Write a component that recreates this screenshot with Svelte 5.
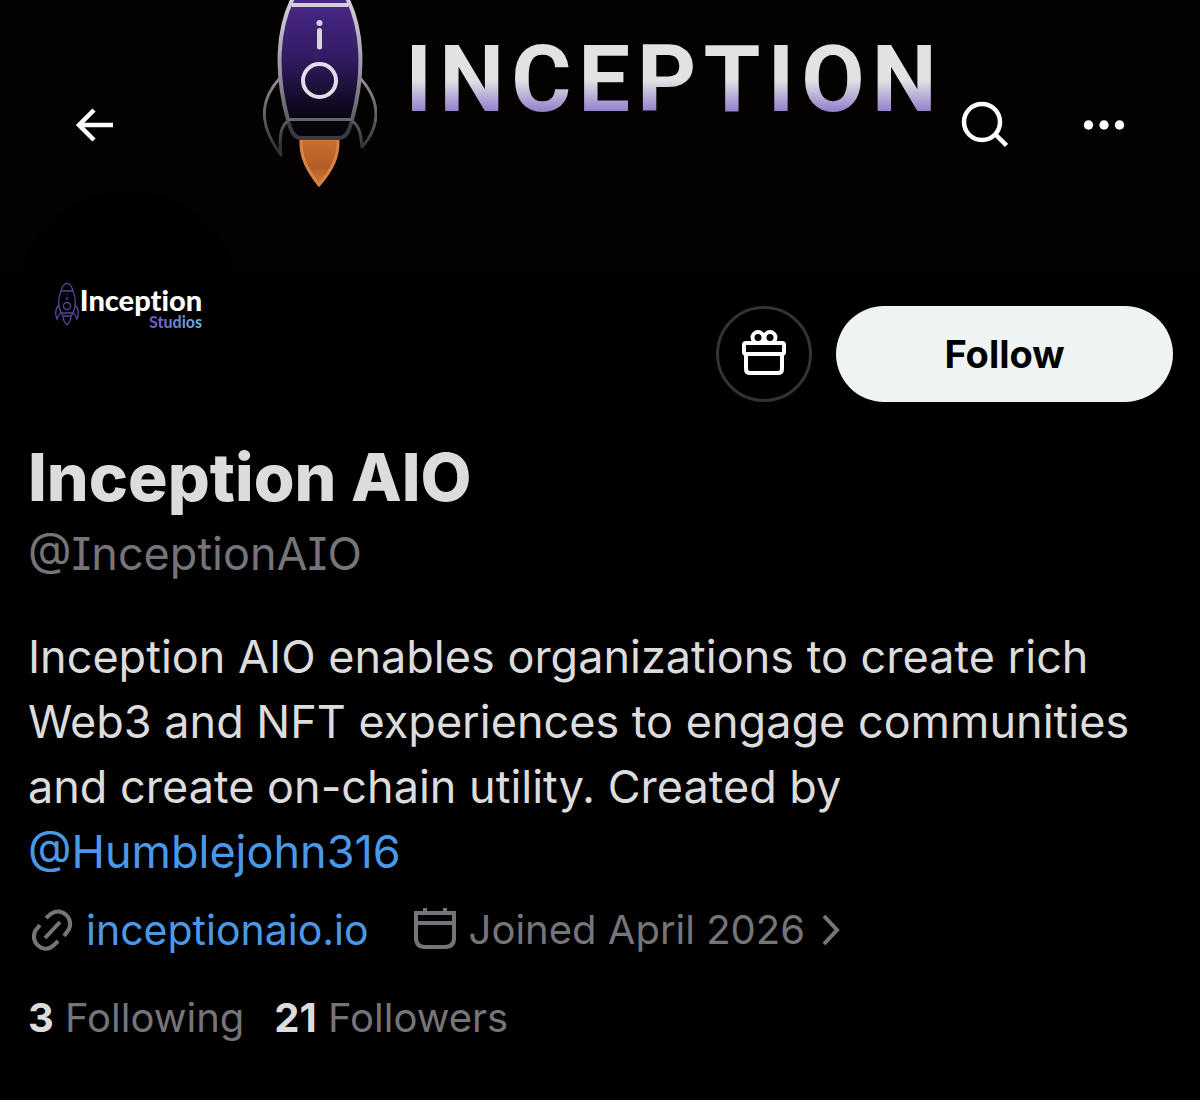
<script lang="ts">
	const profile = {
		name: 'Inception AIO',
		handle: '@InceptionAIO',
		site: 'inceptionaio.io',
		joined: 'Joined April 2026',
		following: 3,
		followers: 21
	};
</script>

<main class="profile">
	<header class="banner">
		<div class="banner-art">
			<svg class="rocket" viewBox="0 0 114 190" aria-hidden="true">
				<defs>
					<linearGradient id="hull" x1="0" y1="0" x2="0" y2="1">
						<stop offset="0" stop-color="#4b2a8c" />
						<stop offset="0.5" stop-color="#321b62" />
						<stop offset="0.85" stop-color="#130a28" />
						<stop offset="1" stop-color="#05040b" />
					</linearGradient>
					<linearGradient id="line" gradientUnits="userSpaceOnUse" x1="0" y1="0" x2="0" y2="150">
						<stop offset="0" stop-color="#d3cfdc" />
						<stop offset="0.35" stop-color="#aaa7b4" />
						<stop offset="0.75" stop-color="#66656c" />
						<stop offset="1" stop-color="#303036" />
					</linearGradient>
					<linearGradient id="flame" x1="0" y1="0" x2="0" y2="1">
						<stop offset="0" stop-color="#c9712f" />
						<stop offset="0.6" stop-color="#b45d28" />
						<stop offset="1" stop-color="#d27a38" />
					</linearGradient>
				</defs>
				<path d="M38 139H75C76 158 68 171 56 185C45 171 37 158 38 139Z" fill="url(#flame)" stroke="#d98445" stroke-width="3" />
				<g stroke="url(#line)" stroke-width="4" fill="none" stroke-linejoin="round">
					<path d="M31 -4C14 28 12 72 25 120H89C102 72 100 28 83 -4Z" fill="url(#hull)" />
					<path d="M25 120C28 132 31 138 39 138H75C83 138 86 132 89 120" fill="#05040b" stroke="#3b3a42" />
					<path d="M29 5H85" stroke="#d3cfdc" />
					<path d="M25 119.500H89" stroke="#66656c" stroke-width="3" />
					<g stroke-width="3">
						<path d="M17 78C-6 103 -2 128 18 155C16 139 17 126 25 121" />
						<path d="M97 78C120 103 116 128 99 147C98 136 97 126 89 121" />
					</g>
				</g>
				<circle cx="56.500" cy="23" r="3" fill="#d8d5df" />
				<path d="M56.500 30.500V47" stroke="#d8d5df" stroke-width="5" stroke-linecap="round" />
				<circle cx="56.500" cy="80.500" r="16.500" fill="none" stroke="#e0dde8" stroke-width="4" />
			</svg>
			<span class="wordmark">INCEPTION</span>
		</div>

		<nav class="toolbar" aria-label="Profile toolbar">
			<button class="icon-btn" aria-label="Back">
				<svg width="40" height="40" viewBox="0 0 40 40"><path d="M39 20H5M20 5L5 20L20 35" fill="none" stroke="#fff" stroke-width="4.500" /></svg>
			</button>
			<div class="toolbar-end">
				<button class="icon-btn" aria-label="Search">
					<svg width="48" height="48" viewBox="0 0 48 48"><circle cx="22" cy="21" r="18" fill="none" stroke="#fff" stroke-width="4.500" /><path d="M35 33L46.500 44.500" stroke="#fff" stroke-width="4.500" /></svg>
				</button>
				<button class="icon-btn" aria-label="More">
					<svg width="44" height="12" viewBox="0 0 44 12" fill="#fff"><circle cx="6.500" cy="6" r="4.700" /><circle cx="22" cy="6" r="4.700" /><circle cx="37.500" cy="6" r="4.700" /></svg>
				</button>
			</div>
		</nav>
	</header>

	<section class="top-row">
		<div class="avatar">
			<svg width="26" height="46" viewBox="0 0 26 46" fill="none" stroke="#514a94" stroke-width="1.300" aria-hidden="true">
				<path d="M7 10C8 6 10 3 13 2C16 3 18 6 19 10C22 17 22 25 19 32H7C4 25 4 17 7 10ZM7 10H19M7 32L9 35H17L19 32M9 35C9 39 11 42 13 44C15 42 17 39 17 35" />
				<path d="M5 24C1 28 1 33 3 38C4 35 5 33 7 32M21 24C25 28 25 33 23 38C22 35 21 33 19 32" />
				<circle cx="13" cy="25" r="3.500" />
				<path d="M13 13V14M13 16V19" />
			</svg>
			<div class="avatar-text">
				<span class="avatar-name">Inception</span>
				<span class="avatar-sub">Studios</span>
			</div>
		</div>

		<div class="actions">
			<button class="gift" aria-label="Gift">
				<svg width="46" height="48" viewBox="0 0 46 48" fill="none" stroke="#fff" stroke-width="4" stroke-linejoin="round">
					<rect x="3" y="13" width="40" height="11" rx="2" />
					<path d="M5 24V39Q5 43 9 43H37Q41 43 41 39V24" />
					<circle cx="17" cy="7.500" r="5.500" />
					<circle cx="29" cy="7.500" r="5.500" />
				</svg>
			</button>
			<button class="follow">Follow</button>
		</div>
	</section>

	<section class="info">
		<h1>{profile.name}</h1>
		<p class="handle">{profile.handle}</p>
		<p class="bio">
			Inception AIO enables organizations to create rich<br />
			Web3 and NFT experiences to engage communities<br />
			and create on-chain utility. Created by<br />
			<a href="#humblejohn">@Humblejohn316</a>
		</p>

		<div class="meta">
			<a class="meta-item site" href="#site">
				<svg width="46" height="44" viewBox="0 0 46 44" fill="none" stroke="#757579" stroke-width="4">
					<path d="M18 10L22 6.500C33 -3 49 12 39 24L36 28M12 17L9 20.500C-1 32 15 48 26 37L30 33M17 30L32 14" />
				</svg>
				{profile.site}
			</a>
			<button class="meta-item joined">
				<svg width="44" height="44" viewBox="0 0 44 44" fill="none" stroke="#757579" stroke-width="4">
					<path d="M3 5H41V30Q41 39 32 39H12Q3 39 3 30ZM3 15H41M12 0V5M32 0V5" />
				</svg>
				{profile.joined}
				<svg width="26" height="34" viewBox="0 0 26 34" fill="none" stroke="#757579" stroke-width="4"><path d="M7 3L20 17L7 31" /></svg>
			</button>
		</div>

		<div class="stats">
			<a href="#following"><strong>{profile.following}</strong> Following</a>
			<a href="#followers"><strong>{profile.followers}</strong> Followers</a>
		</div>
	</section>
</main>

<style>
	:global(body) {
		margin: 0;
		background: #000;
	}

	.profile {
		min-height: 100vh;
		background: #000;
		color: #dcdcdc;
		font-family: Inter, Roboto, sans-serif;
	}

	button {
		padding: 0;
		border: 0;
		background: none;
		font: inherit;
		color: inherit;
		cursor: pointer;
	}

	a {
		color: #4a99e9;
		text-decoration: none;
	}

	svg {
		display: block;
		flex: none;
	}

	h1,
	p {
		margin: 0;
	}

	.banner {
		display: grid;
		height: 274px;
		background: #040101;
		overflow: hidden;
	}

	.banner-art,
	.toolbar {
		grid-area: 1 / 1;
	}

	.banner-art {
		display: flex;
		justify-content: center;
		align-items: flex-start;
		gap: 28px;
	}

	.rocket {
		width: 114px;
		height: 190px;
	}

	.wordmark {
		margin: 26px -7px 0 0;
		font-family: Roboto, sans-serif;
		font-size: 92px;
		font-weight: 700;
		line-height: 108px;
		letter-spacing: 7px;
		color: transparent;
		background: linear-gradient(#e2e2e2 50%, #9682cc 78%);
		background-clip: text;
	}

	.toolbar {
		display: flex;
		justify-content: space-between;
		align-items: center;
		height: 250px;
		padding: 0 74px;
	}

	.toolbar-end {
		display: flex;
		align-items: center;
		gap: 74px;
	}

	.top-row {
		display: flex;
		justify-content: space-between;
		align-items: flex-end;
		margin-top: -82px;
		padding: 0 27px 0 16px;
	}

	.avatar {
		display: flex;
		justify-content: center;
		align-items: center;
		width: 224px;
		height: 224px;
		border-radius: 50%;
		background: #000;
	}

	.avatar-text {
		display: flex;
		flex-direction: column;
		padding-top: 10px;
		font-family: Lato, sans-serif;
		font-weight: 900;
		font-variant-ligatures: none;
	}

	.avatar-name {
		font-size: 29px;
		line-height: 26px;
		color: #fff;
	}

	.avatar-sub {
		align-self: flex-end;
		font-size: 16px;
		line-height: 18px;
		color: transparent;
		background: linear-gradient(90deg, #6a4fc8, #62b4e0);
		background-clip: text;
	}

	.actions {
		display: flex;
		gap: 24px;
		padding-bottom: 14px;
	}

	.gift {
		display: grid;
		place-items: center;
		box-sizing: border-box;
		width: 96px;
		height: 96px;
		border: 3px solid #333336;
		border-radius: 50%;
	}

	.follow {
		width: 337px;
		height: 96px;
		border-radius: 48px;
		background: #eff3f4;
		color: #000;
		font-size: 38px;
		font-weight: 700;
	}

	.info {
		padding: 20px 28px;
	}

	h1 {
		font-size: 66px;
		font-weight: 800;
		line-height: 82px;
	}

	.handle {
		font-size: 45px;
		line-height: 72px;
		color: #757579;
		font-feature-settings: 'cv08';
	}

	.bio {
		margin-top: 34px;
		font-size: 45px;
		line-height: 65px;
	}

	.meta {
		display: flex;
		gap: 44px;
		margin-top: 18px;
		font-size: 40px;
		line-height: 56px;
	}

	.meta-item {
		display: flex;
		align-items: center;
		gap: 12px;
	}

	.site {
		font-size: 41px;
	}

	.joined {
		color: #757579;
	}

	.stats {
		display: flex;
		gap: 30px;
		margin-top: 32px;
		font-size: 40px;
		line-height: 56px;
	}

	.stats a {
		color: #757579;
	}

	.stats strong {
		color: #dcdcdc;
		font-weight: 700;
	}
</style>
